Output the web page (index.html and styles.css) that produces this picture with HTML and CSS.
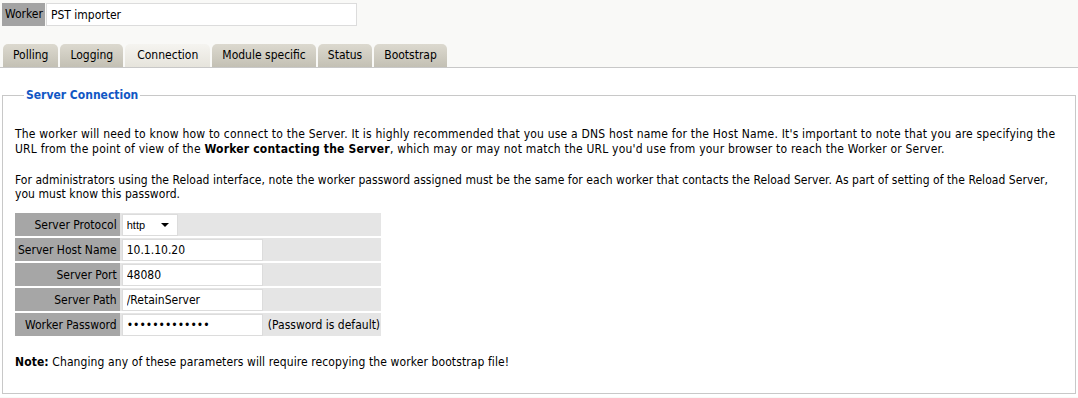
FILE: index.html
```html
<!DOCTYPE html>
<html lang="en">
<head>
    <meta charset="UTF-8">
    <title>Worker Connection</title>
    <link rel="stylesheet" href="styles.css">
</head>
<body>

    <!-- Worker name -->
    <div class="worker-bar">
        <span class="worker-label">Worker</span>
        <input class="worker-name" type="text" value="PST importer">
    </div>

    <!-- Tabs -->
    <div class="tabs">
        <span class="tab">Polling</span>
        <span class="tab">Logging</span>
        <span class="tab active">Connection</span>
        <span class="tab">Module specific</span>
        <span class="tab">Status</span>
        <span class="tab">Bootstrap</span>
    </div>

    <!-- Content -->
    <div class="content">
        <fieldset class="box">
            <legend>Server Connection</legend>

            <p>The worker will need to know how to connect to the Server. It is highly recommended that you use a DNS host name for the Host Name. It's important to note that you are specifying the URL from the point of view of the <b>Worker contacting the Server</b>, which may or may not match the URL you'd use from your browser to reach the Worker or Server.</p>

            <p class="second">For administrators using the Reload interface, note the worker password assigned must be the same for each worker that contacts the Reload Server. As part of setting of the Reload Server, you must know this password.</p>

            <table class="settings">
                <tr>
                    <td class="label">Server Protocol</td>
                    <td>
                        <span class="select-wrap">
                            <select class="proto"><option>http</option><option>https</option></select>
                        </span>
                    </td>
                    <td></td>
                </tr>
                <tr>
                    <td class="label">Server Host Name</td>
                    <td><input type="text" value="10.1.10.20"></td>
                    <td></td>
                </tr>
                <tr>
                    <td class="label">Server Port</td>
                    <td><input type="text" value="48080"></td>
                    <td></td>
                </tr>
                <tr>
                    <td class="label">Server Path</td>
                    <td><input type="text" value="/RetainServer"></td>
                    <td></td>
                </tr>
                <tr>
                    <td class="label">Worker Password</td>
                    <td><input type="password" value="xxxxxxxxxxxxx"></td>
                    <td class="hint">(Password is default)</td>
                </tr>
            </table>

            <p class="note"><b>Note:</b> Changing any of these parameters will require recopying the worker bootstrap file!</p>
        </fieldset>
    </div>

</body>
</html>
```

FILE: styles.css
```css
body {
    font-family: "DejaVu Sans Condensed", "DejaVu Sans", sans-serif;
    font-size: 12px;
    color: #000;
    background-color: #f9f9f7;
    margin: 0;
    padding: 0;
}

.worker-bar {
    display: flex;
    padding: 3px 0 0 2px;
    height: 24px;
}

.worker-label {
    background-color: #a3a3a3;
    padding: 0 2px 0 3px;
    line-height: 23px;
    height: 23px;
}

.worker-name {
    width: 311px;
    height: 23px;
    box-sizing: border-box;
    margin: 0 0 0 1px;
    border: 1px solid #dcdcdc;
    padding: 0 4px;
    font: inherit;
}

.tabs {
    display: flex;
    gap: 2px;
    padding: 17px 0 0 3px;
    border-bottom: 1px solid #c8c8c8;
}

.tab {
    height: 23px;
    line-height: 23px;
    padding: 0 10px;
    border-radius: 5px 5px 0 0;
    background: linear-gradient(#dcd9cf, #c3c0b4);
}

.tab.active {
    padding: 0 12px;
    background: linear-gradient(#f5f4f0, #e6e4dc);
}

.content {
    background-color: #fff;
    padding: 20px 2px 3px 2px;
}

.box {
    margin: 0;
    border: 1px solid #c8c8c8;
    padding: 8px 12px 23px 12px;
}

.box legend {
    color: #1157c4;
    font-weight: bold;
    padding: 0 2px;
    margin-left: 9px;
}

.box p {
    margin: 17px 0 0 0;
    line-height: 15px;
    letter-spacing: 0.2px;
}

.box p.second {
    margin-top: 16px;
    line-height: 14px;
    letter-spacing: 0.05px;
}

.box p.note {
    margin-top: 17px;
    letter-spacing: 0.1px;
}

.settings {
    border-spacing: 0 2px;
    margin-top: 10px;
    width: 366px;
    background-color: #fff;
}

.settings td {
    background-color: #e5e5e5;
    padding: 0;
    height: 23px;
}

.settings td.label {
    background-color: #a6a6a6;
    text-align: right;
    padding: 0 3px;
    width: 96px;
    white-space: nowrap;
}

.settings input {
    display: block;
    width: 141px;
    height: 22px;
    box-sizing: border-box;
    border: 1px solid #dcdcdc;
    padding: 0 4px;
    margin-left: 2px;
    font: inherit;
}

.select-wrap {
    position: relative;
    display: block;
    width: 56px;
    margin-left: 2px;
}

.select-wrap::after {
    content: "";
    position: absolute;
    right: 9px;
    top: 9px;
    border-left: 4px solid transparent;
    border-right: 4px solid transparent;
    border-top: 4px solid #000;
    pointer-events: none;
}

.settings select.proto {
    display: block;
    appearance: none;
    width: 56px;
    height: 22px;
    padding: 0 4px;
    font-family: "Liberation Sans", sans-serif;
    font-size: 11px;
    border: 1px solid #dcdcdc;
    border-radius: 0;
    background-color: #fff;
    color: #000;
}

.settings td.hint {
    padding-left: 4px;
    white-space: nowrap;
}
```
